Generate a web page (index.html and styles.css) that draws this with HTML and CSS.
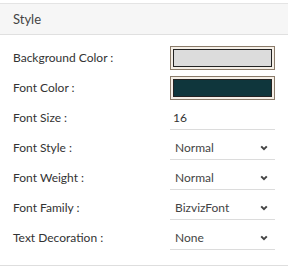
FILE: index.html
```html
<!DOCTYPE html>
<html>
<head>
<meta charset="utf-8">
<link rel="stylesheet" href="styles.css">
</head>
<body>
<div class="panel">
  <div class="header">Style</div>
  <div class="body">
    <div class="row">
      <div class="label">Background Color :</div>
      <div class="swatch"><div class="fill bg"></div></div>
    </div>
    <div class="row">
      <div class="label">Font Color :</div>
      <div class="swatch"><div class="fill fc"></div></div>
    </div>
    <div class="row">
      <div class="label">Font Size :</div>
      <div class="field">16</div>
    </div>
    <div class="row">
      <div class="label">Font Style :</div>
      <div class="field select"><span>Normal</span><svg class="chev" viewBox="0 0 8 6" width="8" height="6"><path d="M1.2 1.4 L4 4.2 L6.8 1.4" fill="none" stroke="#444" stroke-width="2"/></svg></div>
    </div>
    <div class="row">
      <div class="label">Font Weight :</div>
      <div class="field select"><span>Normal</span><svg class="chev" viewBox="0 0 8 6" width="8" height="6"><path d="M1.2 1.4 L4 4.2 L6.8 1.4" fill="none" stroke="#444" stroke-width="2"/></svg></div>
    </div>
    <div class="row">
      <div class="label">Font Family :</div>
      <div class="field select"><span>BizvizFont</span><svg class="chev" viewBox="0 0 8 6" width="8" height="6"><path d="M1.2 1.4 L4 4.2 L6.8 1.4" fill="none" stroke="#444" stroke-width="2"/></svg></div>
    </div>
    <div class="row">
      <div class="label">Text Decoration :</div>
      <div class="field select"><span>None</span><svg class="chev" viewBox="0 0 8 6" width="8" height="6"><path d="M1.2 1.4 L4 4.2 L6.8 1.4" fill="none" stroke="#444" stroke-width="2"/></svg></div>
    </div>
  </div>
</div>
</body>
</html>
```
FILE: styles.css
```css
html, body {
  margin: 0;
  padding: 0;
  background: #fff;
}
body {
  font-family: Lato, "Open Sans", sans-serif;
  color: #333;
  font-size: 12px;
}
.panel {
  margin-top: 3px;
  border-top: 1px solid #e4e4e4;
  border-bottom: 1px solid #dedede;
  width: 288px;
  padding-bottom: 15px;
}
.header {
  height: 30px;
  line-height: 30px;
  background: #f6f6f6;
  border-bottom: 1px solid #e0e0e0;
  padding-left: 13px;
  font-size: 13px;
  color: #444;
}
.body {
  padding: 5px 0 0 13px;
}
.row {
  display: grid;
  grid-template-columns: 157px 105px;
  align-items: end;
  height: 30px;
}
.label {
  height: 24px;
  line-height: 24px;
}
.swatch {
  box-sizing: border-box;
  height: 24px;
  border: 1px solid #8a7b6a;
  background: #f5efe7;
  padding: 2px;
}
.fill {
  height: 100%;
  box-sizing: border-box;
  border: 1px solid #222;
}
.fill.bg { background: #dcdcdc; }
.fill.fc { background: #0f363c; }
.field {
  box-sizing: border-box;
  height: 24px;
  line-height: 23px;
  border-bottom: 1px solid #dcdcdc;
  padding-left: 3px;
  font-size: 12px;
}
.select {
  display: flex;
  justify-content: space-between;
  align-items: center;
  padding-left: 5px;
  padding-right: 7px;
  color: #444;
}
.chev { display: block; }
```
